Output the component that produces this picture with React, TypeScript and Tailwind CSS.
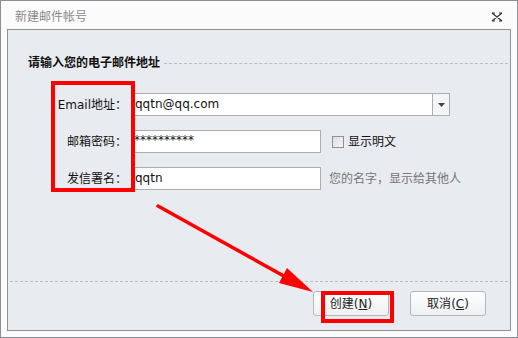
import React from "react";

const font = { fontFamily: '"DejaVu Sans", "Noto Sans CJK SC", sans-serif' };

function Btn({ text, hot }: { text: string; hot: string }) {
  return (
    <button className="w-[76px] h-[25px] rounded-[3px] border border-[#b4b7bd] bg-gradient-to-b from-[#ffffff] to-[#eef0f2] text-[12px] text-[#222] flex items-center justify-center">
      {text}(<span className="underline">{hot}</span>)
    </button>
  );
}

export default function App() {
  return (
    <div className="w-[518px] h-[338px] relative overflow-hidden border border-[#8c8f95] bg-[#fbfbfb] flex flex-col" style={font}>
      <div className="h-[28px] shrink-0 flex items-center justify-between pl-[14px] pr-[14px]">
        <span className="text-[12px] text-[#8a8a8a] pt-[3px]">新建邮件帐号</span>
        <svg width="12" height="10" viewBox="0 0 12 10" className="mt-[4px]">
          <path d="M1 1 L11 9 M11 1 L1 9 M1 1h3 M8 1h3 M1 9h3 M8 9h3" stroke="#333" strokeWidth="1.2" fill="none" />
        </svg>
      </div>

      <div className="mx-[6px] h-[302px] border border-[#8f9297] bg-[#e8ebf0] flex flex-col">
        <div className="flex items-center mt-[26px] pl-[20px] pr-[2px] h-[14px]">
          <span className="text-[12px] font-bold text-[#111] whitespace-nowrap">请输入您的电子邮件地址</span>
          <div className="flex-1 border-t border-dashed border-[#b9bdc4] ml-[4px]" />
        </div>

        <div className="flex items-center mt-[23px] h-[23px]">
          <span className="w-[119px] text-right text-[12px] text-[#111]">Email地址：</span>
          <div className="ml-[5px] w-[318px] h-[23px] border border-[#abadb3] bg-white flex">
            <span className="flex-1 text-[12px] text-[#111] pl-[2px] leading-[21px]">qqtn@qq.com</span>
            <div className="w-[17px] border-l border-[#abadb3] bg-[#f4f5f7] flex items-center justify-center">
              <svg width="7" height="4" viewBox="0 0 7 4"><path d="M0 0h7L3.5 4z" fill="#444" /></svg>
            </div>
          </div>
        </div>

        <div className="flex items-center mt-[14px] h-[23px]">
          <span className="w-[119px] text-right text-[12px] text-[#111]">邮箱密码：</span>
          <div className="ml-[5px] w-[189px] h-[23px] border border-[#abadb3] bg-white text-[12px] text-[#111] leading-[19px] pl-[1px]">**********</div>
          <div className="ml-[11px] w-[12px] h-[12px] border border-[#8e9196] bg-gradient-to-br from-[#dcdee2] to-[#f7f7f8]" />
          <span className="ml-[4px] text-[12px] text-[#111]">显示明文</span>
        </div>

        <div className="flex items-center mt-[14px] h-[23px]">
          <span className="w-[119px] text-right text-[12px] text-[#111]">发信署名：</span>
          <div className="ml-[5px] w-[189px] h-[23px] border border-[#abadb3] bg-white text-[12px] text-[#111] leading-[21px] pl-[2px]">qqtn</div>
          <span className="ml-[8px] text-[12px] text-[#777]">您的名字，显示给其他人</span>
        </div>

        <div className="mt-[91px] mx-[2px] border-t border-dashed border-[#b9bdc4]" />

        <div className="mt-[9px] flex justify-end gap-[21px] pr-[24px]">
          <Btn text="创建" hot="N" />
          <Btn text="取消" hot="C" />
        </div>
      </div>

      {/* annotations */}
      <div className="absolute left-[50px] top-[80px] w-[84px] h-[111px] border-[4px] border-[#ff0000]" />
      <div className="absolute left-[320px] top-[290px] w-[73px] h-[32px] border-[4px] border-[#ff0000]" />
      <svg className="absolute left-0 top-0 pointer-events-none" width="518" height="338">
        <line x1="157" y1="205" x2="290" y2="279" stroke="#ff0000" strokeWidth="3.5" strokeLinecap="round" />
        <polygon points="312,291 278,282 286,267" fill="#ff0000" />
      </svg>
    </div>
  );
}
